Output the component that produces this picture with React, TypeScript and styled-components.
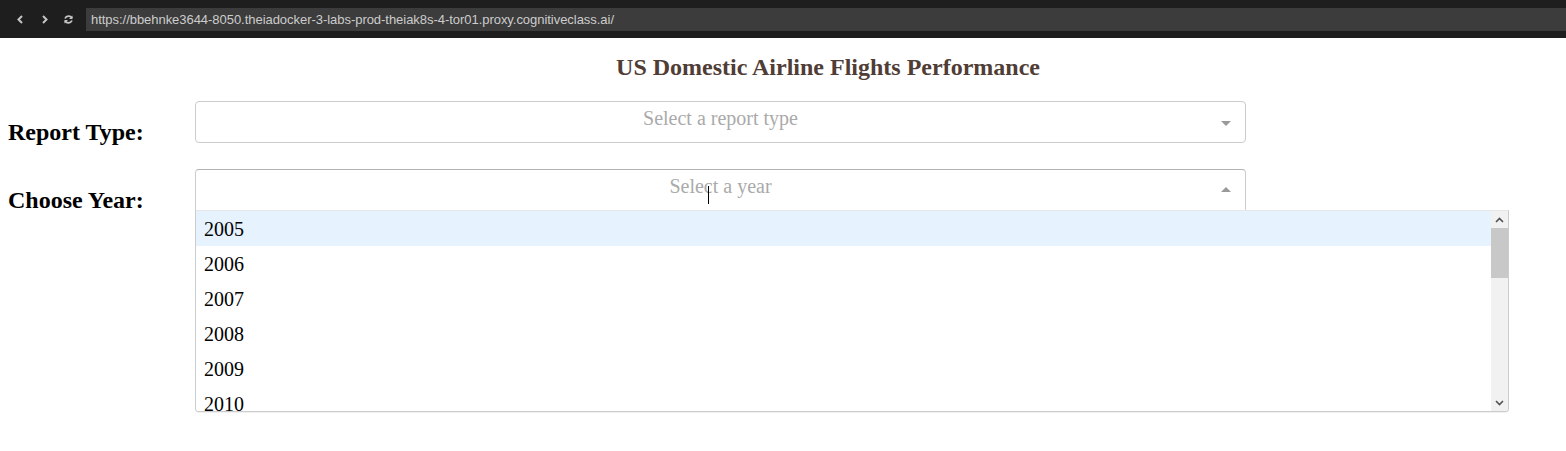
import React from "react";
import styled, { createGlobalStyle } from "styled-components";

const GlobalStyle = createGlobalStyle`
  html, body { margin: 0; padding: 0; background: #ffffff; }
  body { font-family: "Liberation Serif", "Times New Roman", serif; }
`;

const Chrome = styled.div`
  height: 38px;
  background: #1e1e1e;
  display: flex;
  align-items: flex-start;
  box-sizing: border-box;
  padding-top: 8px;
`;

const NavButtons = styled.div`
  width: 86px;
  height: 23px;
  display: flex;
  align-items: center;
  padding-left: 14px;
  gap: 11px;
  box-sizing: border-box;
`;

const NavIcon = styled.svg`
  width: 13px;
  height: 13px;
  display: block;
`;

const Address = styled.div`
  flex: 1;
  height: 23px;
  background: #3c3c3c;
  color: #cccccc;
  font-family: "Liberation Sans", Arial, sans-serif;
  font-size: 13px;
  letter-spacing: -0.04px;
  line-height: 23px;
  padding-left: 5px;
  white-space: nowrap;
  overflow: hidden;
`;

const Page = styled.div`
  padding: 0 8px;
  min-height: 413px;
`;

const Title = styled.h1`
  margin: 0;
  padding: 15px 0 17px 90px;
  font-size: 24px;
  line-height: 28px;
  font-weight: bold;
  text-align: center;
  color: #503d36;
`;

const Row = styled.div`
  display: flex;
  align-items: flex-start;
  height: 68px;
`;

const Label = styled.h2`
  margin: 20px 0 0 0;
  width: 187px;
  font-size: 24px;
  line-height: 28px;
  font-weight: bold;
  color: #000000;
`;

const SelectWrap = styled.div`
  position: relative;
  padding-top: 3px;
  width: 1051px;
`;

const Control = styled.div<{ $open?: boolean }>`
  position: relative;
  box-sizing: border-box;
  height: 42px;
  border: 1px solid #cccccc;
  border-color: ${(p) => (p.$open ? "#b3b3b3 #cccccc #d9d9d9" : "#cccccc")};
  border-radius: ${(p) => (p.$open ? "4px 4px 0 0" : "4px")};
  background: #ffffff;
  font-size: 20px;
`;

const Placeholder = styled.div`
  text-align: center;
  color: #aaaaaa;
  line-height: 32px;
`;

const Arrow = styled.span<{ $up?: boolean }>`
  position: absolute;
  right: 14px;
  width: 0;
  height: 0;
  border-left: 5px solid transparent;
  border-right: 5px solid transparent;
  ${(p) =>
    p.$up
      ? "border-bottom: 5px solid #999999; top: 17px;"
      : "border-top: 5px solid #999999; top: 19px;"}
`;

const Caret = styled.span`
  position: absolute;
  left: 512px;
  top: 16px;
  width: 1px;
  height: 18px;
  background: #000000;
`;

const Menu = styled.div`
  position: absolute;
  left: 0;
  top: 44px;
  width: 1314px;
  height: 202px;
  box-sizing: border-box;
  border: 1px solid #cccccc;
  border-top-color: #e6e6e6;
  border-radius: 0 0 4px 4px;
  box-shadow: 0 1px 0 rgba(0, 0, 0, 0.06);
  background: #ffffff;
  display: flex;
  overflow: hidden;
  z-index: 2;
`;

const Options = styled.div`
  flex: 1;
  overflow: hidden;
`;

const Option = styled.div<{ $focused?: boolean }>`
  height: 35px;
  line-height: 37px;
  overflow: hidden;
  padding-left: 8px;
  font-size: 20px;
  color: #000000;
  background: ${(p) => (p.$focused ? "#e6f2fe" : "#ffffff")};
`;

const ScrollBar = styled.div`
  width: 17px;
  background: #f1f1f1;
  display: flex;
  flex-direction: column;
`;

const ScrollArrow = styled.div`
  height: 17px;
  display: flex;
  align-items: center;
  justify-content: center;
`;

const ScrollTrack = styled.div`
  flex: 1;
`;

const Thumb = styled.div`
  height: 50px;
  background: #c8c8c8;
`;

const years = ["2005", "2006", "2007", "2008", "2009", "2010"];

export default function App() {
  return (
    <>
      <GlobalStyle />
      <Chrome>
        <NavButtons>
          <NavIcon viewBox="0 0 13 13">
            <path d="M8 3 L4.5 6.5 L8 10" fill="none" stroke="#c5c5c5" strokeWidth="2" />
          </NavIcon>
          <NavIcon viewBox="0 0 13 13">
            <path d="M5 3 L8.5 6.5 L5 10" fill="none" stroke="#c5c5c5" strokeWidth="2" />
          </NavIcon>
          <NavIcon viewBox="0 0 13 13">
            <path d="M10 5 A4 4 0 0 0 3 5.5" fill="none" stroke="#c5c5c5" strokeWidth="1.8" />
            <path d="M10.5 2.5 L10.5 6 L7 6 Z" fill="#c5c5c5" />
            <path d="M3 8 A4 4 0 0 0 10 7.5" fill="none" stroke="#c5c5c5" strokeWidth="1.8" />
            <path d="M2.5 10.5 L2.5 7 L6 7 Z" fill="#c5c5c5" />
          </NavIcon>
        </NavButtons>
        <Address>https://bbehnke3644-8050.theiadocker-3-labs-prod-theiak8s-4-tor01.proxy.cognitiveclass.ai/</Address>
      </Chrome>
      <Page>
        <Title>US Domestic Airline Flights Performance</Title>
        <Row>
          <Label>Report Type:</Label>
          <SelectWrap>
            <Control>
              <Placeholder>Select a report type</Placeholder>
              <Arrow />
            </Control>
          </SelectWrap>
        </Row>
        <Row>
          <Label>Choose Year:</Label>
          <SelectWrap>
            <Control $open>
              <Placeholder>Select a year</Placeholder>
              <Caret />
              <Arrow $up />
            </Control>
            <Menu>
              <Options>
                {years.map((y, i) => (
                  <Option key={y} $focused={i === 0}>
                    {y}
                  </Option>
                ))}
              </Options>
              <ScrollBar>
                <ScrollArrow>
                  <svg width="9" height="6" viewBox="0 0 9 6">
                    <path d="M1 5 L4.5 1.5 L8 5" fill="none" stroke="#505050" strokeWidth="1.6" />
                  </svg>
                </ScrollArrow>
                <ScrollTrack>
                  <Thumb />
                </ScrollTrack>
                <ScrollArrow>
                  <svg width="9" height="6" viewBox="0 0 9 6">
                    <path d="M1 1 L4.5 4.5 L8 1" fill="none" stroke="#505050" strokeWidth="1.6" />
                  </svg>
                </ScrollArrow>
              </ScrollBar>
            </Menu>
          </SelectWrap>
        </Row>
      </Page>
    </>
  );
}
